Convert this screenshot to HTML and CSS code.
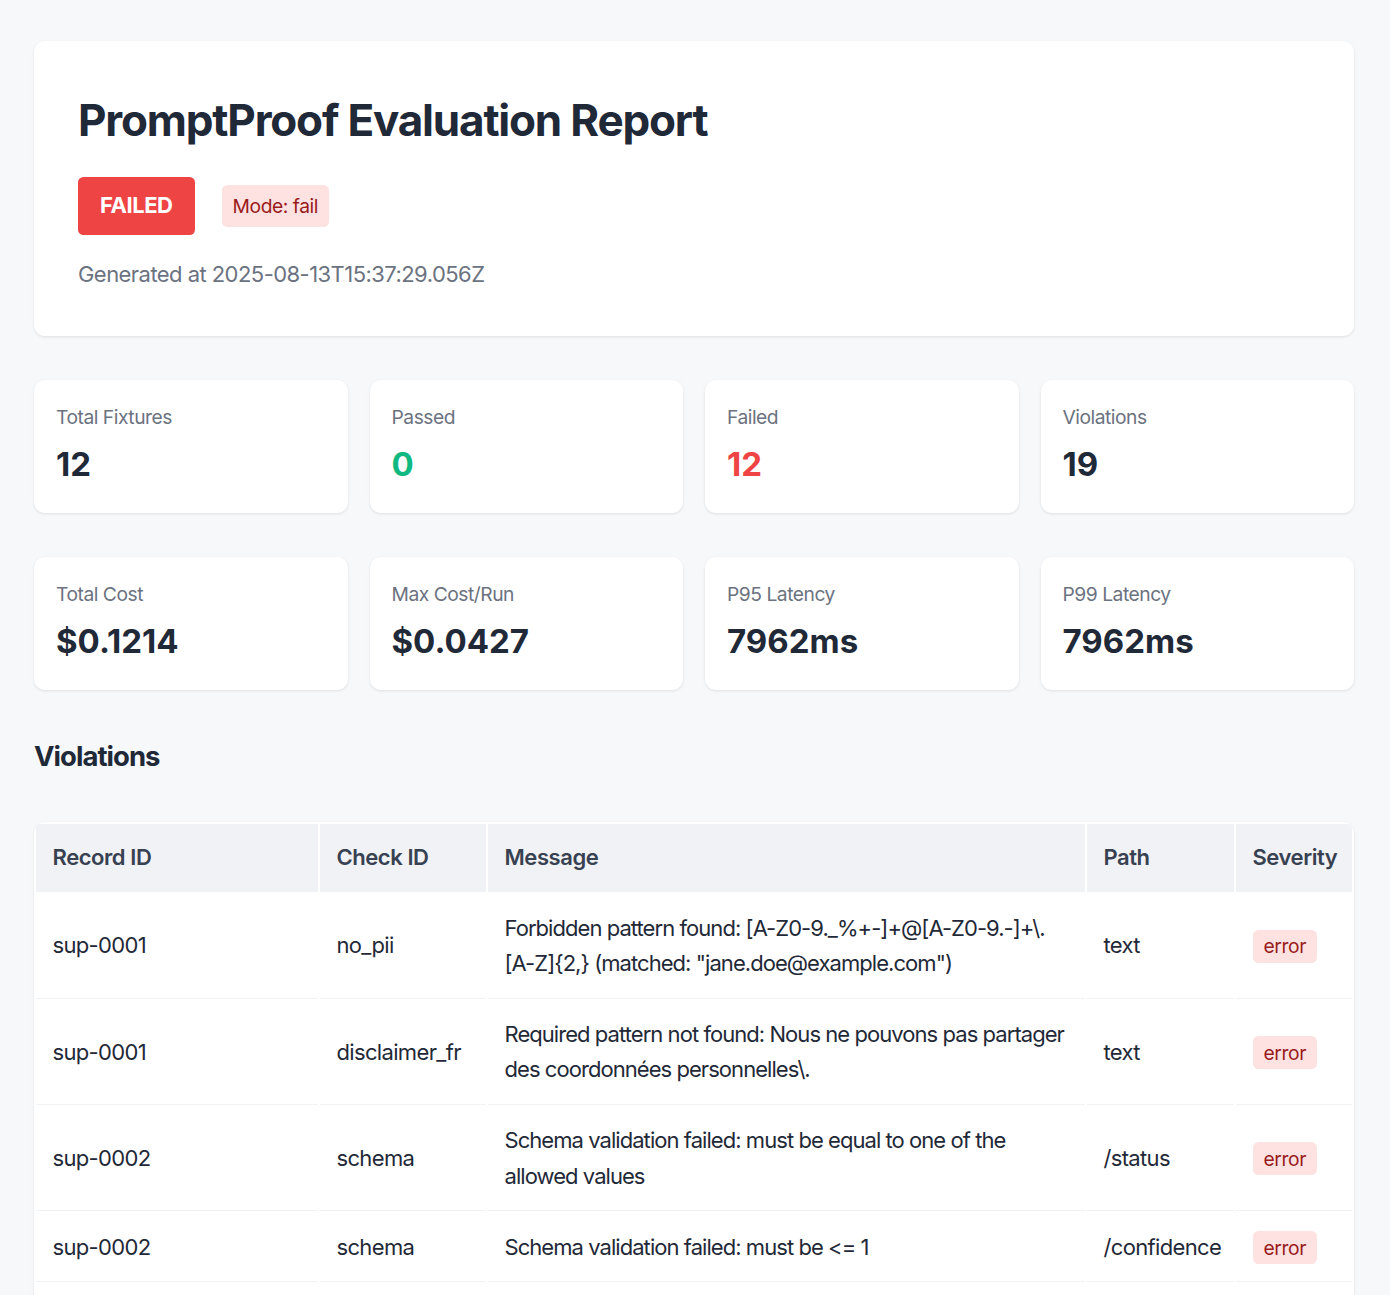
FILE: index.html
```html
<!DOCTYPE html>
<html lang="en">
<head>
<meta charset="utf-8">
<title>PromptProof Evaluation Report</title>
<link rel="stylesheet" href="styles.css">
</head>
<body>
<div class="container">
  <header class="card header">
    <h1 class="title">PromptProof Evaluation Report</h1>
    <div class="badges">
      <span class="status status-failed">FAILED</span>
      <span class="mode">Mode: fail</span>
    </div>
    <p class="generated">Generated at 2025-08-13T15:37:29.056Z</p>
  </header>

  <section class="stats">
    <div class="card stat"><div class="stat-label">Total Fixtures</div><div class="stat-value">12</div></div>
    <div class="card stat"><div class="stat-label">Passed</div><div class="stat-value pass">0</div></div>
    <div class="card stat"><div class="stat-label">Failed</div><div class="stat-value fail">12</div></div>
    <div class="card stat"><div class="stat-label">Violations</div><div class="stat-value">19</div></div>
  </section>

  <section class="stats">
    <div class="card stat"><div class="stat-label">Total Cost</div><div class="stat-value">$0.1214</div></div>
    <div class="card stat"><div class="stat-label">Max Cost/Run</div><div class="stat-value">$0.0427</div></div>
    <div class="card stat"><div class="stat-label">P95 Latency</div><div class="stat-value">7962ms</div></div>
    <div class="card stat"><div class="stat-label">P99 Latency</div><div class="stat-value">7962ms</div></div>
  </section>

  <h2 class="section-title">Violations</h2>

  <div class="table-wrap">
    <table class="violations">
      <colgroup>
        <col class="col-record">
        <col class="col-check">
        <col class="col-message">
        <col class="col-path">
        <col class="col-severity">
      </colgroup>
      <thead>
        <tr><th>Record ID</th><th>Check ID</th><th>Message</th><th>Path</th><th>Severity</th></tr>
      </thead>
      <tbody>
        <tr><td>sup-0001</td><td>no_pii</td><td class="msg">Forbidden pattern found: [A-Z0-9._%+-]+@[A-Z0-9.-]+\.[A-Z]{2,} (matched: "jane.doe@example.com")</td><td>text</td><td><span class="sev">error</span></td></tr>
        <tr><td>sup-0001</td><td>disclaimer_fr</td><td class="msg">Required pattern not found: Nous ne pouvons pas partager des coordonnées personnelles\.</td><td>text</td><td><span class="sev">error</span></td></tr>
        <tr><td>sup-0002</td><td>schema</td><td class="msg">Schema validation failed: must be equal to one of the allowed values</td><td>/status</td><td><span class="sev">error</span></td></tr>
        <tr><td>sup-0002</td><td>schema</td><td class="msg">Schema validation failed: must be &lt;= 1</td><td>/confidence</td><td><span class="sev">error</span></td></tr>
        <tr><td>sup-0003</td><td>no_pii</td><td class="msg">Forbidden pattern found: \b\d{3}-\d{3}-\d{4}\b</td><td>text</td><td><span class="sev">error</span></td></tr>
        <tr><td>sup-0004</td><td>schema</td><td class="msg">Schema validation failed: must have required property 'status'</td><td>/</td><td><span class="sev">error</span></td></tr>
      </tbody>
    </table>
  </div>
</div>
</body>
</html>
```

FILE: styles.css
```css
* { box-sizing: border-box; }

body {
  margin: 0;
  background: #f7f8fa;
  color: #1f2937;
  font-family: Inter, "Noto Sans", "Liberation Sans", sans-serif;
  font-size: 22px;
  line-height: 1.6;
  letter-spacing: -0.02em;
}

.container {
  width: 1390px;
  padding: 41px 36px 41px 34px;
}

.card {
  background: #ffffff;
  border-radius: 11px;
  box-shadow: 0 1px 3px rgba(0, 0, 0, 0.1);
}

.header {
  padding: 44px;
  margin-bottom: 44px;
}

.title {
  margin: 0 0 22px;
  font-size: 44px;
  font-weight: 700;
  line-height: 1.6;
  letter-spacing: -0.027em;
  color: #1f2937;
}

.badges {
  display: flex;
  align-items: center;
  gap: 27px;
  margin-bottom: 22px;
}

.status {
  display: inline-block;
  padding: 11px 22px;
  border-radius: 5.5px;
  font-size: 22px;
  font-weight: 700;
  color: #ffffff;
}

.status-failed { background: #ef4444; }

.mode {
  display: inline-block;
  padding: 5.5px 11px;
  border-radius: 5.5px;
  background: #fee2e2;
  color: #991b1b;
  font-size: 19.25px;
}

.generated {
  margin: 0;
  color: #6b7280;
  font-size: 22px;
  letter-spacing: -0.025em;
}

.stats {
  display: grid;
  grid-template-columns: repeat(4, 1fr);
  gap: 22px;
  margin-bottom: 44px;
}

.stat { padding: 22px; }

.stat-label {
  font-size: 19.25px;
  color: #6b7280;
  letter-spacing: -0.025em;
}

.stat-value {
  margin-top: 5.5px;
  font-size: 33px;
  font-weight: 700;
  letter-spacing: 0;
  color: #1f2937;
}

.stat-value.pass { color: #10b981; }
.stat-value.fail { color: #ef4444; }

.section-title {
  margin: 0 0 44px;
  font-size: 27.5px;
  font-weight: 700;
  line-height: 1.6;
  letter-spacing: -0.035em;
  color: #1f2937;
}

.table-wrap {
  background: #ffffff;
  border-radius: 11px;
  box-shadow: 0 1px 3px rgba(0, 0, 0, 0.1);
  overflow: hidden;
}

.violations {
  width: 100%;
  table-layout: fixed;
  border-collapse: separate;
  border-spacing: 2px;
}

.col-record { width: 282px; }
.col-check { width: 166px; }
.col-message { width: 597px; }
.col-path { width: 147px; }
.col-severity { width: 116px; }

.violations th {
  padding: 16.5px;
  background: #f1f2f5;
  text-align: left;
  font-weight: 600;
  color: #374151;
}

.violations td {
  padding: 16.5px;
  border-bottom: 1px solid #f1f2f4;
  vertical-align: middle;
  color: #1f2937;
  letter-spacing: -0.03em;
}

.violations td.msg { letter-spacing: -0.043em; }

.sev {
  display: inline-block;
  padding: 5.5px 11px;
  border-radius: 5.5px;
  background: #fee2e2;
  color: #991b1b;
  font-size: 19.25px;
  line-height: 22px;
  letter-spacing: -0.02em;
}
```
